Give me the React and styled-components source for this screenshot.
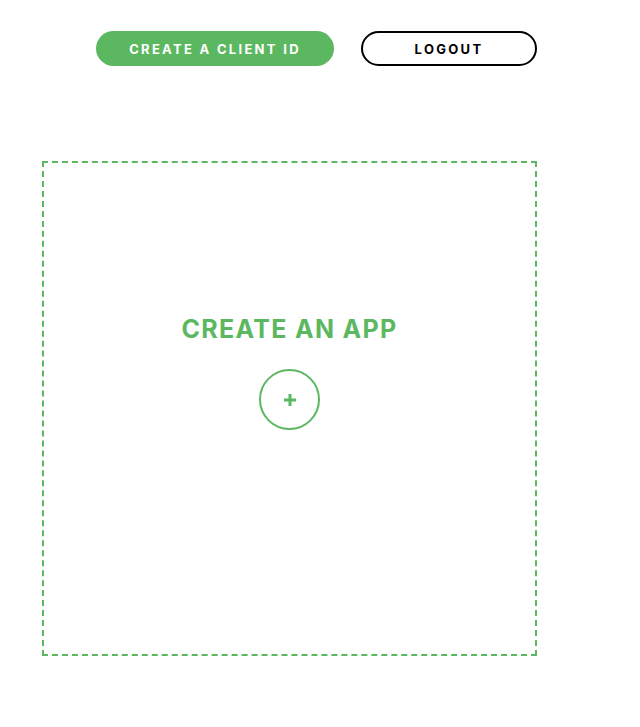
import styled, { createGlobalStyle } from 'styled-components';

const GlobalStyle = createGlobalStyle`
    body {
        margin: 0;
        background: #FFFFFF;
        font-family: "Inter", "Liberation Sans", sans-serif;
    }
`;

export default function App() {
    return (
        <>
            <GlobalStyle />
            <Page>
                <Header>
                    <PillButton variant="primary">Create a client ID</PillButton>
                    <PillButton variant="outline">Logout</PillButton>
                </Header>
                <CreateBox>
                    <CreateTitle>Create an app</CreateTitle>
                    <AddCircle>
                        <svg width="14" height="14" viewBox="0 0 14 14">
                            <path d="M7 1v12M1 7h12" stroke="#5CB860" strokeWidth="3" />
                        </svg>
                    </AddCircle>
                </CreateBox>
            </Page>
        </>
    )
}

const Page = styled.div`
    width: 640px;
    min-height: 727px;
    padding-top: 31px;
    box-sizing: border-box;
`;

const Header = styled.div`
    display: flex;
    gap: 27px;
    padding-left: 96px;
`;

const PillButton = styled.button`
    height: 35px;
    width: ${({ variant }) => variant === 'primary' ? '238px' : '176px'};
    border-radius: 18px;
    box-sizing: border-box;
    border: ${({ variant }) => variant === 'primary' ? 'none' : '2px solid #000000'};
    background: ${({ variant }) => variant === 'primary' ? '#5CB860' : '#FFFFFF'};
    color: ${({ variant }) => variant === 'primary' ? '#FFFFFF' : '#000000'};
    font-family: "Inter", "Liberation Sans", sans-serif;
    font-size: 13px;
    font-weight: 700;
    letter-spacing: 2.3px;
    text-transform: uppercase;
    display: flex;
    align-items: center;
    justify-content: center;
    padding: 0;
    cursor: pointer;
`;

const CreateBox = styled.div`
    width: 495px;
    height: 495px;
    margin: 95px 0 0 42px;
    box-sizing: border-box;
    border: 2px dashed #5CB860;
    display: flex;
    flex-direction: column;
    align-items: center;
    padding-top: 150px;
    cursor: pointer;
`;

const CreateTitle = styled.h2`
    margin: 0;
    color: #5CB860;
    font-size: 25px;
    font-weight: 700;
    line-height: 32px;
    text-transform: uppercase;
    letter-spacing: 1.3px;
`;

const AddCircle = styled.div`
    width: 61px;
    height: 61px;
    margin-top: 24px;
    box-sizing: border-box;
    border: 2px solid #5CB860;
    border-radius: 50%;
    display: flex;
    align-items: center;
    justify-content: center;
`;
